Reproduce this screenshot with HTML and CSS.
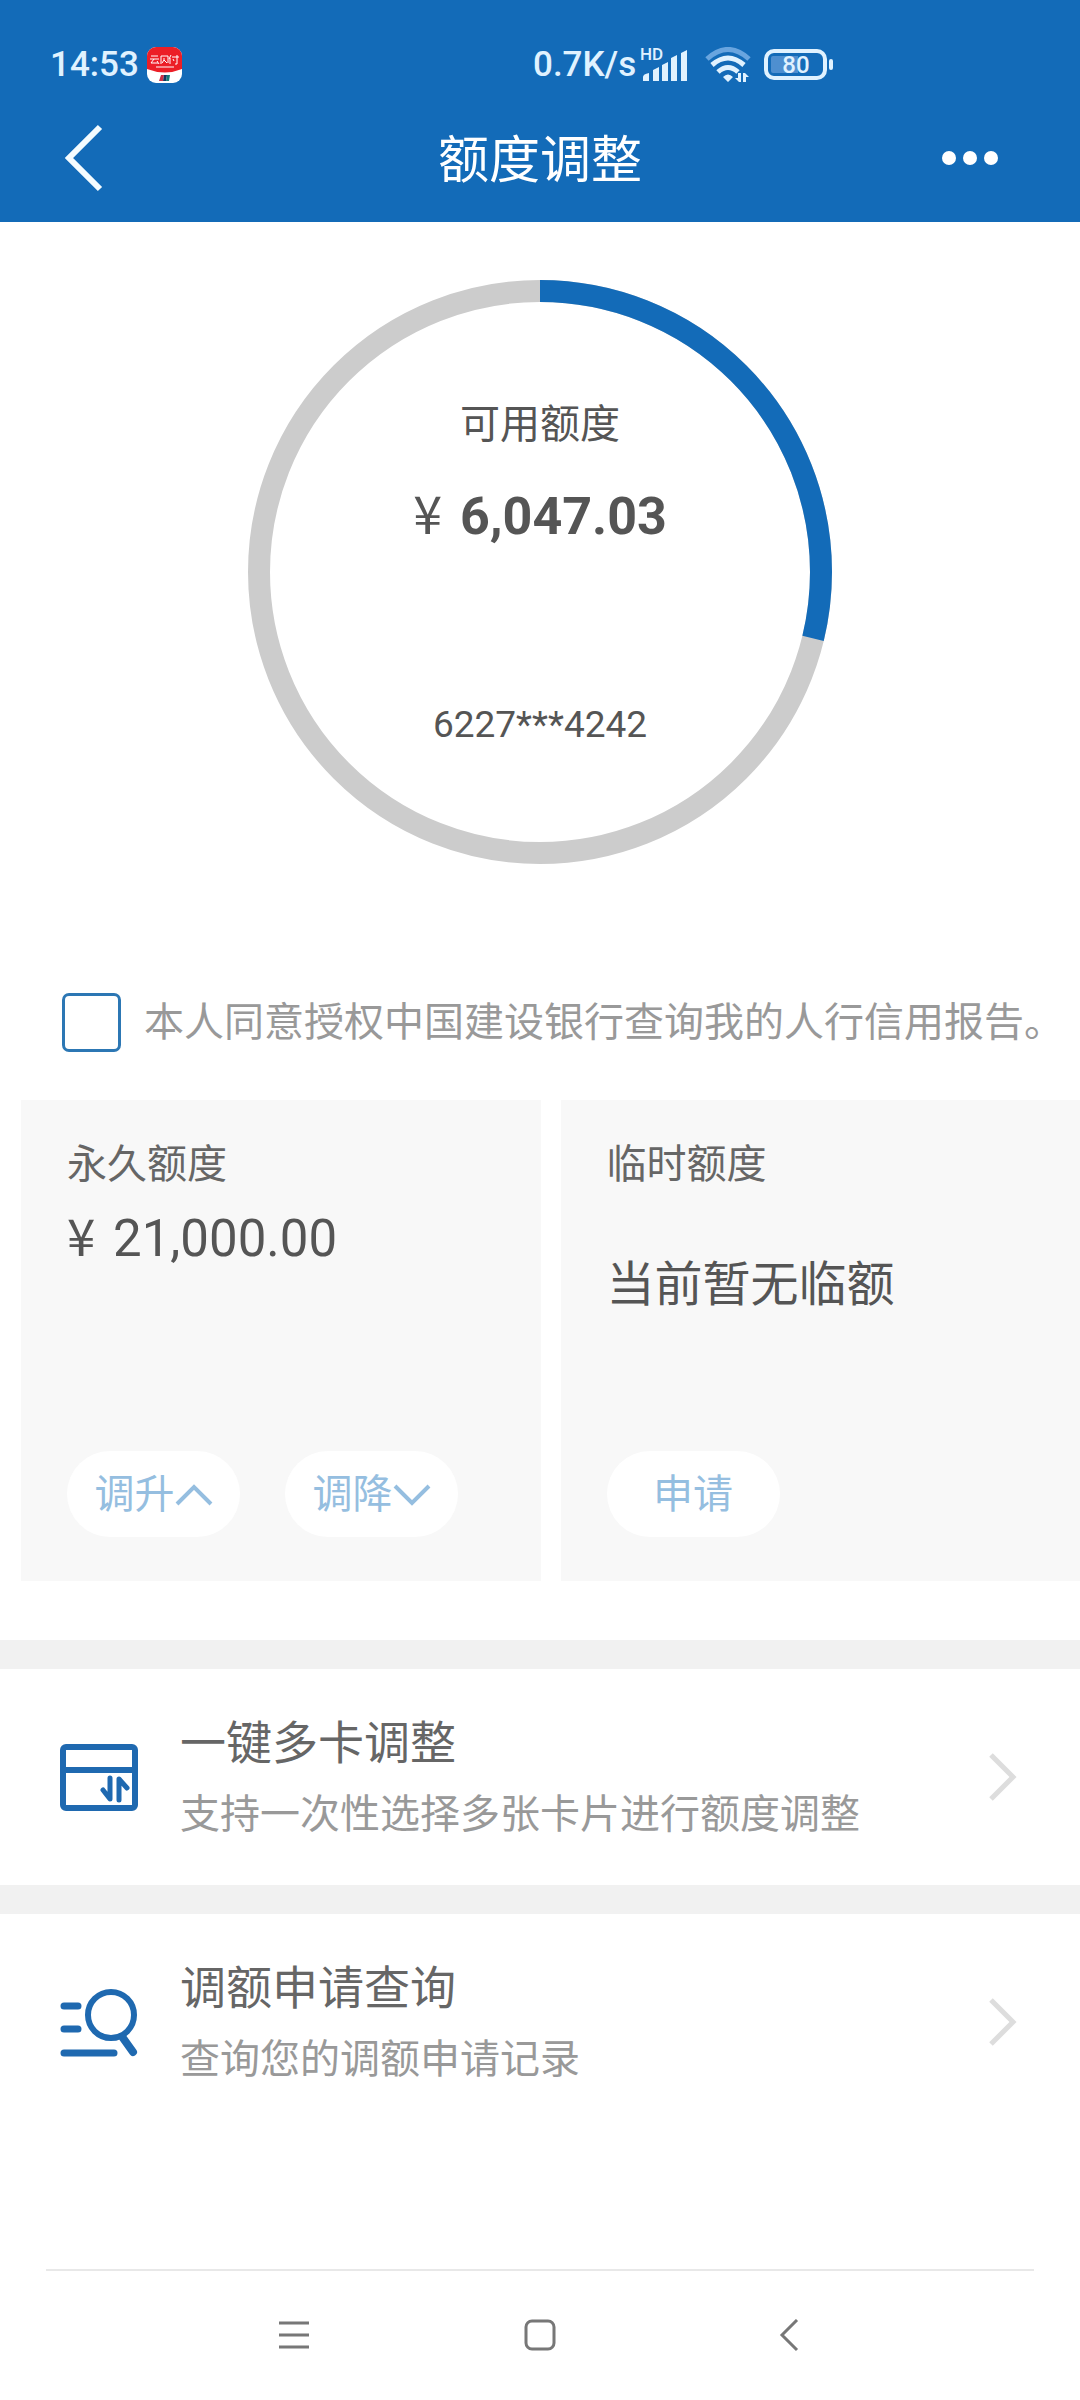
FILE: index.html
```html
<!DOCTYPE html>
<html lang="zh-CN">
<head>
<meta charset="utf-8">
<meta name="viewport" content="width=device-width, initial-scale=1">
<title>额度调整</title>
<link rel="stylesheet" href="styles.css">
</head>
<body>
<div class="screen">
  <header class="header">
    <div class="status">
      <div class="status-left">
        <span>14:53</span>
        <svg class="app-icon" viewBox="0 0 35 36" width="35" height="36" aria-hidden="true">
          <rect width="35" height="36" rx="9" fill="#fff"/>
          <path d="M0 22V9a9 9 0 0 1 9-9h17a9 9 0 0 1 9 9v13q-17 7-35 0z" fill="#ec1f27"/>
          <g fill="none" stroke="#fff" stroke-width="1">
            <path d="M4 9h7M3 12h9M7 12l-3 4h7M10 14l2 3M14 9v8M14 9h7v7M17 11v2l-2 3M17 13l3 3M24 8l-2 4M23 11v6M25 10h7M30 8v9h-2M26 12l1 2M9 20h18" />
          </g>
          <path d="M14 28h3l-1 6h-4z" fill="#d02f45"/><path d="M17 28h3l-1 6h-3z" fill="#163760"/><path d="M20 28h3l-1 6h-3z" fill="#177a77"/>
        </svg>
      </div>
      <div class="status-right">
        <span>0.7K/s</span>
        <svg class="signal" viewBox="0 0 52 44" width="52" height="44" aria-hidden="true">
          <text x="0" y="17" class="hd">HD</text>
          <g fill="#e0f2ff"><path d="M3 38v-4q0-3 6-4v8zM13 38V27l6-3v14zM22 38V22l6-3v19zM31 38V15l6-3v26zM41 38V10l6-3v31z"/></g>
        </svg>
        <svg class="wifi" viewBox="0 0 46 36" width="46" height="36" aria-hidden="true">
          <g fill="none" stroke="#e0f2ff" stroke-width="5">
            <path d="M2 12Q23-7 44 12" stroke="#69a5df"/>
            <path d="M7 18Q23 4 39 18"/><path d="M13 25q10-9 20 0"/>
          </g>
          <path d="M18 30q5-5 10 0l-5 5zM36 26v9h-2l-4-4h3v-5zM38 35v-9h2l4 4h-3v5z" fill="#e0f2ff"/>
        </svg>
        <svg class="battery" viewBox="0 0 70 32" width="70" height="32" aria-label="80%">
          <rect x="2" y="2" width="59" height="27" rx="8" fill="none" stroke="#e0f2ff" stroke-width="4"/>
          <path d="M9 7h25v17H9q-2 0-2-2V9q0-2 2-2z" fill="#4e8fd0"/>
          <rect x="65" y="10" width="4" height="11" rx="2" fill="#e0f2ff"/>
          <text x="32" y="24" text-anchor="middle" class="level">80</text>
        </svg>
      </div>
    </div>
    <div class="titlebar">
      <button class="icon-button" aria-label="返回">
        <svg viewBox="0 0 40 70" width="40" height="70"><path d="M36 4L5 35l31 31" fill="none" stroke="#f4fcff" stroke-width="6"/></svg>
      </button>
      <h1>额度调整</h1>
      <button class="icon-button end" aria-label="更多">
        <svg viewBox="0 0 56 14" width="56" height="14" fill="#fff"><circle cx="7" cy="7" r="7"/><circle cx="28" cy="7" r="7"/><circle cx="49" cy="7" r="7"/></svg>
      </button>
    </div>
  </header>

  <main class="main">
    <section class="gauge">
      <svg class="ring" viewBox="0 0 584 584" aria-hidden="true">
        <circle cx="292" cy="292" r="281" fill="none" stroke="#ccc" stroke-width="22"/>
        <circle cx="292" cy="292" r="281" fill="none" stroke="#136bb8" stroke-width="22" pathLength="1000" stroke-dasharray="288 712" transform="rotate(-90 292 292)"/>
      </svg>
      <div class="gauge-text">
        <p class="gauge-label">可用额度</p>
        <p class="gauge-amount"><span class="yen">¥</span> 6,047.03</p>
        <p class="gauge-card">6227***4242</p>
      </div>
    </section>

    <label class="agree"><input type="checkbox" class="tick"><span>本人同意授权中国建设银行查询我的人行信用报告。</span></label>

    <section class="cards">
      <article class="card">
        <h2>永久额度</h2>
        <p class="amount"><span class="yen">¥</span> 21,000.00</p>
        <div class="actions">
          <button class="pill">调升<svg viewBox="0 0 38 24" width="38" height="24"><path d="M2 21L19 4l17 17" /></svg></button>
          <button class="pill">调降<svg viewBox="0 0 38 24" width="38" height="24"><path d="M2 3l17 17L36 3" /></svg></button>
        </div>
      </article>
      <article class="card">
        <h2>临时额度</h2>
        <p class="notice">当前暂无临额</p>
        <div class="actions"><button class="pill">申请</button></div>
      </article>
    </section>

    <nav class="list">
      <a class="row" href="#multi">
        <svg viewBox="0 0 78 72" width="78" height="72" class="row-icon">
          <rect x="3" y="6" width="72" height="61" rx="3"/><path d="M3 29h72"/><path d="M50 37v21l-7-9M59 59V38l8 9" stroke-width="5"/>
        </svg>
        <span class="row-text"><strong>一键多卡调整</strong><small>支持一次性选择多张卡片进行额度调整</small></span>
        <svg class="chevron" viewBox="0 0 30 50" width="30" height="50"><path d="M3 3l22 22L3 47"/></svg>
      </a>
      <a class="row" href="#records">
        <svg viewBox="0 0 78 72" width="78" height="72" class="row-icon">
          <ellipse cx="51" cy="29" rx="23" ry="23"/><path d="M63 52l10 14" stroke-width="8"/><path d="M4 20h14M4 43h14M4 67h50" stroke-width="7"/>
        </svg>
        <span class="row-text"><strong>调额申请查询</strong><small>查询您的调额申请记录</small></span>
        <svg class="chevron" viewBox="0 0 30 50" width="30" height="50"><path d="M3 3l22 22L3 47"/></svg>
      </a>
    </nav>
  </main>

  <footer class="sysnav">
    <button aria-label="最近任务"><svg viewBox="0 0 34 34" width="34" height="34"><path d="M2 4h30M2 16h30M2 28h30"/></svg></button>
    <button aria-label="主屏幕"><svg viewBox="0 0 34 34" width="34" height="34"><rect x="3" y="2" width="28" height="28" rx="6"/></svg></button>
    <button aria-label="返回上一页"><svg viewBox="0 0 34 34" width="34" height="34"><path d="M28 1L13 16l15 15"/></svg></button>
  </footer>
</div>
</body>
</html>
```
FILE: styles.css
```css
* { box-sizing: border-box; }

body {
  margin: 0;
  background: #fff;
  color: #555;
  font-family: Roboto, "Noto Sans CJK SC", sans-serif;
  font-size: 40px;
  line-height: 60px;
}

h1, h2, p { margin: 0; font-weight: 400; }

button {
  border: 0;
  padding: 0;
  background: none;
  font: inherit;
  color: inherit;
}

svg { display: block; flex: none; }

.screen {
  min-height: 100vh;
  display: flex;
  flex-direction: column;
}

/* Header */
.header {
  background: #136bb8;
  color: #fff;
  padding-top: 41px;
}

.status {
  display: grid;
  grid-template-columns: 1fr 1fr;
  height: 47px;
  padding-left: 50px;
  align-items: center;
  color: #e0f2ff;
  font-size: 35px;
  font-weight: 500;
  line-height: 48px;
}

.status-left, .status-right { display: flex; align-items: center; }
.status-left { gap: 8px; }
.status-right { gap: 13px; margin-left: -32px; }
.signal { margin-left: -9px; }
.hd { font-size: 17px; font-weight: 500; fill: #e0f2ff; }
.level { font-size: 24px; font-weight: 500; fill: #e0f2ff; }

.titlebar {
  display: grid;
  grid-template-columns: 1fr auto 1fr;
  align-items: center;
  height: 134px;
}

.titlebar h1 { padding-top: 12px; font-size: 51px; line-height: 80px; }
.icon-button { justify-self: start; margin-top: 6px; margin-left: 64px; }
.icon-button.end { justify-self: end; margin-right: 82px; }

/* Credit gauge */
.main { flex: 1; }

.gauge {
  display: grid;
  justify-content: center;
  padding-top: 58px;
}

.ring, .gauge-text { grid-area: 1 / 1; }
.ring { width: 584px; height: 584px; }
.gauge-text { text-align: center; padding-top: 115px; }
.gauge-amount { margin-top: 27px; font-size: 52px; font-weight: 700; }
.gauge-card { margin-top: 148px; font-size: 37px; }
.yen { margin-right: 5px; font-family: "Noto Sans CJK SC", sans-serif; font-weight: 400; }

/* Consent */
.agree {
  display: flex;
  align-items: center;
  gap: 23px;
  margin-top: 127px;
  padding-left: 62px;
  color: #999;
  white-space: nowrap;
}

.agree span { padding-top: 2px; }

.tick {
  appearance: none;
  flex: none;
  width: 59px;
  height: 59px;
  margin: 0;
  border: 3px solid #2c77b4;
  border-radius: 7px;
}

.tick:checked { background: #136bb8; }

/* Limit cards */
.cards {
  display: grid;
  grid-template-columns: 1fr 1fr;
  gap: 20px;
  margin-top: 47px;
  padding-left: 21px;
}

.card {
  display: flex;
  flex-direction: column;
  min-height: 481px;
  padding: 35px 46px 44px;
  background: #f8f8f8;
}

.card h2 { font-size: 40px; color: #666; }
.amount { margin-top: 9px; font-size: 51px; }
.notice { margin-top: 60px; font-size: 48px; }

.actions { display: flex; gap: 45px; margin-top: auto; }

.pill {
  display: flex;
  align-items: center;
  justify-content: center;
  width: 173px;
  height: 86px;
  padding-top: 2px;
  border-radius: 43px;
  background: #fff;
  color: #95bee0;
}

.pill path { fill: none; stroke: currentColor; stroke-width: 4; }

/* Link rows */
.list { margin-top: 59px; }

.row {
  display: flex;
  align-items: center;
  min-height: 245px;
  padding: 0 62px 0 60px;
  border-top: 29px solid #f1f1f1;
  color: inherit;
  text-decoration: none;
}

.row-icon { fill: none; stroke: #1f69b0; stroke-width: 6; stroke-linecap: round; stroke-linejoin: round; }
.row-text { flex: 1; display: flex; flex-direction: column; gap: 12px; margin-left: 42px; padding-top: 3px; }
.row-text strong { font-size: 46px; font-weight: 400; color: #666; }
.row-text small { font-size: 40px; color: #999; }
.chevron { fill: none; stroke: #ddd; stroke-width: 5; }

/* System navigation */
.sysnav {
  display: flex;
  justify-content: center;
  gap: 212px;
  margin: 0 46px;
  height: 131px;
  border-top: 2px solid #e8e8e8;
}

.sysnav svg { fill: none; stroke: #777; stroke-width: 3; }
```
